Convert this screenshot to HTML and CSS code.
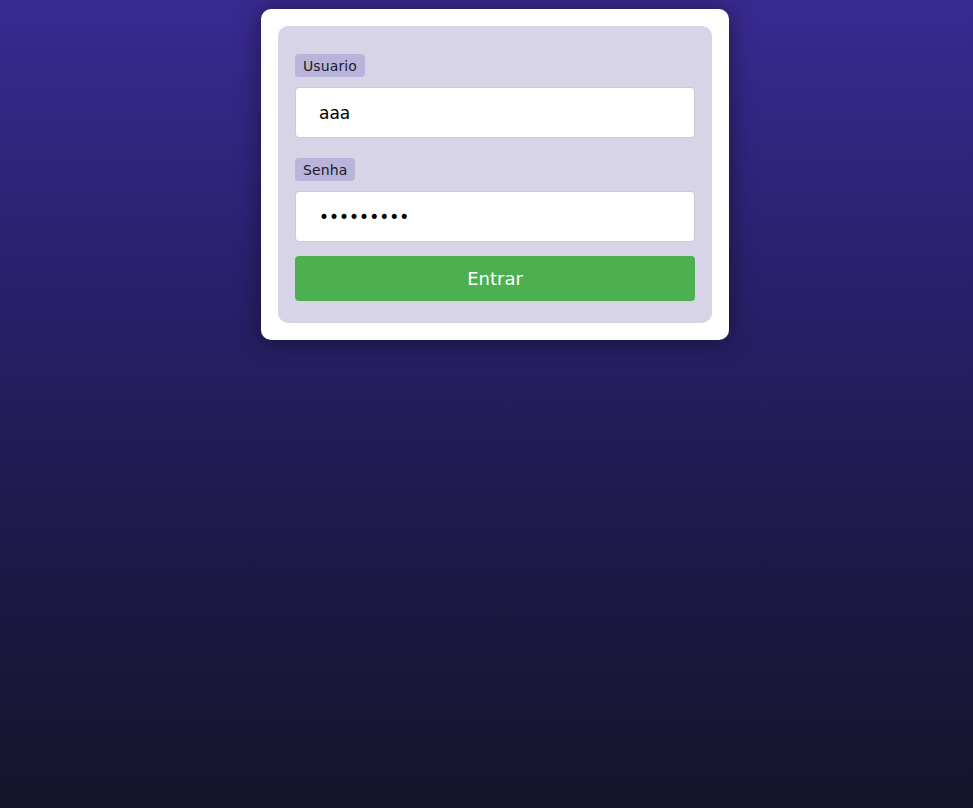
FILE: index.html
```html
<!DOCTYPE html>
<html lang="pt">
<head>
<meta charset="utf-8">
<title>Login</title>
<link rel="stylesheet" href="styles.css">
</head>
<body>
<div class="page">
  <div class="card">
    <form class="panel">
      <label class="tag" for="u">Usuario</label>
      <input id="u" class="field" type="text" value="aaa">
      <label class="tag tag-gap" for="p">Senha</label>
      <input id="p" class="field" type="password" value="123456789">
      <button class="btn" type="button">Entrar</button>
    </form>
  </div>
</div>
</body>
</html>
```
FILE: styles.css
```css
html, body {
  margin: 0;
  height: 100%;
}
body {
  background: linear-gradient(to bottom, #392a91 0%, #271f66 40%, #1c1946 70%, #15142a 100%);
  font-family: "DejaVu Sans", Verdana, sans-serif;
}
.page {
  display: flex;
  justify-content: center;
  padding: 9px 0 0 17px;
}
.card {
  width: 434px;
  background: #fff;
  border-radius: 10px;
  padding: 17px;
  box-shadow: 0 0 24px rgba(0, 0, 0, 0.45);
}
.panel {
  display: flex;
  flex-direction: column;
  align-items: flex-start;
  background: #d8d4e8;
  border-radius: 10px;
  padding: 28px 17px 22px;
  margin: 0;
}
.tag {
  background: #b9b4da;
  color: #1a1a2a;
  font-size: 14px;
  line-height: 17px;
  padding: 4px 8px 2px;
  border-radius: 4px;
  letter-spacing: 0.1px;
}
.tag-gap {
  margin-top: 20px;
}
.field {
  box-sizing: border-box;
  width: 400px;
  height: 51px;
  margin-top: 10px;
  border: 1px solid #cccccc;
  border-radius: 4px;
  background: #fff;
  padding: 0 23px;
  font-family: "DejaVu Sans", Verdana, sans-serif;
  font-size: 17px;
  color: #000;
  outline: none;
}
.btn {
  width: 400px;
  height: 45px;
  margin-top: 14px;
  border: none;
  border-radius: 4px;
  background: #4caf50;
  color: #fff;
  font-family: "DejaVu Sans", Verdana, sans-serif;
  font-size: 18px;
  padding: 0;
  cursor: pointer;
}
```
